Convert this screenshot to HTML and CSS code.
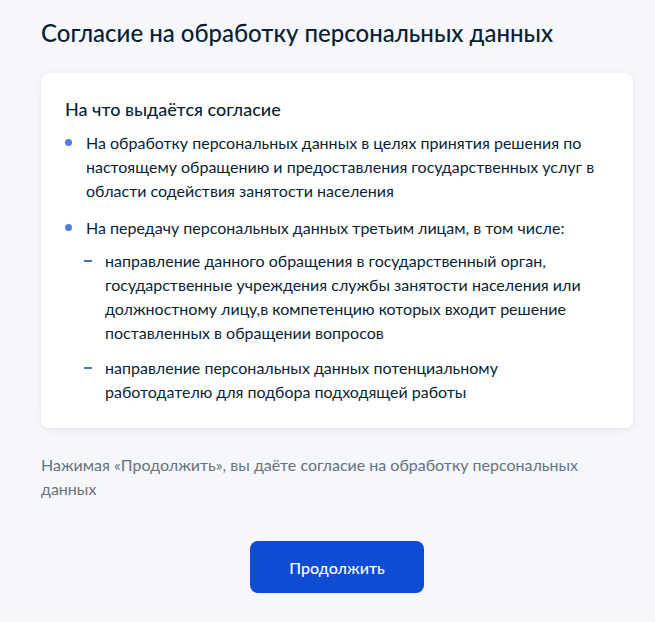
FILE: index.html
```html
<!DOCTYPE html>
<html lang="ru">
<head>
<meta charset="utf-8">
<link rel="stylesheet" href="styles.css">
</head>
<body>
<main class="page">
  <h1 class="title">Согласие на обработку персональных данных</h1>
  <section class="card">
    <h2 class="card-title">На что выдаётся согласие</h2>
    <ul class="list">
      <li class="item">На обработку персональных данных в целях принятия решения по настоящему обращению и предоставления государственных услуг в области содействия занятости населения</li>
      <li class="item">На передачу персональных данных третьим лицам, в том числе:
        <ul class="sublist">
          <li class="subitem">направление данного обращения в государственный орган, государственные учреждения службы занятости населения или должностному лицу,в компетенцию которых входит решение поставленных в обращении вопросов</li>
          <li class="subitem">направление персональных данных потенциальному работодателю для подбора подходящей работы</li>
        </ul>
      </li>
    </ul>
  </section>
  <p class="note">Нажимая «Продолжить», вы даёте согласие на обработку персональных данных</p>
  <div class="actions">
    <button class="btn" type="button">Продолжить</button>
  </div>
</main>
</body>
</html>
```

FILE: styles.css
```css
* { box-sizing: border-box; }
html, body { margin: 0; padding: 0; }
body {
  background: #f5f7fb;
  font-family: Lato, "Noto Sans", sans-serif;
  color: #0b1f33;
}
.page {
  width: 592px;
  margin-left: 41px;
  padding-top: 17px;
}
.title {
  margin: 0;
  font-size: 24px;
  line-height: 32px;
  font-weight: 500;
  color: #0b1f33;
}
.card {
  margin-top: 24px;
  background: #fff;
  border-radius: 8px;
  box-shadow: 0 1px 4px rgba(11, 31, 51, 0.06), 0 2px 12px rgba(11, 31, 51, 0.04);
  padding: 24px;
}
.card-title {
  margin: 0;
  font-size: 18px;
  line-height: 24px;
  font-weight: 500;
}
.list {
  list-style: none;
  margin: 10px 0 0;
  padding: 0;
}
.item {
  position: relative;
  padding-left: 21px;
  font-size: 16px;
  line-height: 24px;
}
.item + .item { margin-top: 13px; }
.item::before {
  content: "";
  position: absolute;
  left: 0;
  top: 8px;
  width: 7px;
  height: 7px;
  border-radius: 50%;
  background: #4f7ee0;
}
.sublist {
  list-style: none;
  margin: 9px 0 0;
  padding: 0;
}
.subitem {
  position: relative;
  padding-left: 19px;
}
.subitem + .subitem { margin-top: 11px; }
.subitem::before {
  content: "";
  position: absolute;
  left: -2px;
  top: 11px;
  width: 8px;
  height: 2px;
  background: #4a72c4;
}
.note {
  margin: 25px 0 0;
  font-size: 16px;
  line-height: 24px;
  color: #66727f;
}
.actions {
  display: flex;
  justify-content: center;
  margin-top: 40px;
}
.btn {
  width: 174px;
  height: 52px;
  border: 0;
  border-radius: 8px;
  background: #0d4cd3;
  color: #fff;
  font-family: Lato, "Noto Sans", sans-serif;
  font-size: 16px;
  font-weight: 500;
}
```
